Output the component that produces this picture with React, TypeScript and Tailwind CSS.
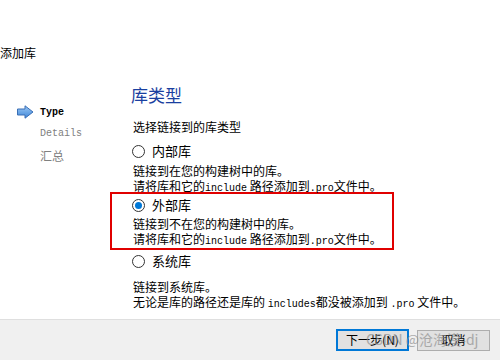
import React from "react";

const cjk = '"Microsoft YaHei", "Noto Sans CJK SC", sans-serif';
const mono = '"Liberation Mono", "Noto Sans CJK SC", monospace';

function Radio({ checked }: { checked?: boolean }) {
  return (
    <span className="relative inline-flex h-[13px] w-[13px] shrink-0 items-center justify-center rounded-full border border-[#333] bg-white">
      {checked && <span className="h-[7px] w-[7px] rounded-full bg-[#0078d7]" />}
    </span>
  );
}

function Mono({ children }: { children: React.ReactNode }) {
  return (
    <span className="text-[10px]" style={{ fontFamily: mono }}>
      {children}
    </span>
  );
}

export default function App() {
  return (
    <div
      className="relative flex h-[360px] w-[500px] flex-col overflow-hidden bg-white text-[12px] text-black"
      style={{ fontFamily: cjk }}
    >
      <div className="min-h-0 flex-1 overflow-hidden">
        <div className="pl-0 pt-[45px] text-[12px] leading-[16px]">添加库</div>
        <div className="flex">
          <div className="w-[131px] shrink-0 pt-[41px]" style={{ fontFamily: mono }}>
            <div className="flex h-[20px] items-center">
              <svg width="17" height="14" viewBox="0 0 17 14" className="ml-[17px] mr-[6px]">
                <defs>
                  <linearGradient id="ag" x1="0" y1="0" x2="0" y2="1">
                    <stop offset="0" stopColor="#9cc8f5" />
                    <stop offset="1" stopColor="#3d86d8" />
                  </linearGradient>
                </defs>
                <path d="M0.5 4 H8 V0.8 L16 7 L8 13.2 V10 H0.5 Z" fill="url(#ag)" stroke="#3a6fb5" strokeWidth="1" />
              </svg>
              <span className="text-[10px] font-bold text-black">Type</span>
            </div>
            <div className="flex h-[22px] items-center pl-[40px] text-[10px] text-[#808080]">Details</div>
            <div className="flex h-[24px] items-center pl-[40px] text-[12px] text-[#808080]" style={{ fontFamily: cjk }}>
              汇总
            </div>
          </div>
          <div className="flex-1 whitespace-nowrap pt-[24px]">
            <div className="text-[17px] leading-[20px] text-[#1a3fa0]">库类型</div>
            <div className="mt-[14px] pl-[2px] leading-[16px]">选择链接到的库类型</div>
            <div className="mt-[8px] flex h-[16px] items-center gap-[7px] pl-[1px] leading-[16px]">
              <Radio />
              <span className="text-[13px]">内部库</span>
            </div>
            <div className="mt-[4px] pl-[2px] leading-[15px]">
              <div className="h-[15px]">链接到在您的构建树中的库。</div>
              <div className="h-[15px]">
                请将库和它的<Mono>include</Mono> 路径添加到<Mono>.pro</Mono>文件中。
              </div>
            </div>
            <div className="-ml-[21px] -mt-[1px] w-[284px] border-2 border-[#e00000] pb-[2px] pl-[19px] pt-[3px]">
              <div className="flex h-[16px] items-center gap-[7px] pl-[1px] leading-[16px]">
                <Radio checked />
                <span className="text-[13px]">外部库</span>
              </div>
              <div className="mt-[3px] pl-[2px] leading-[15px]">
                <div className="h-[15px]">链接到不在您的构建树中的库。</div>
                <div className="h-[15px]">
                  请将库和它的<Mono>include</Mono> 路径添加到<Mono>.pro</Mono>文件中。
                </div>
              </div>
            </div>
            <div className="mt-[3px] flex h-[16px] items-center gap-[7px] pl-[1px] leading-[16px]">
              <Radio />
              <span className="text-[13px]">系统库</span>
            </div>
            <div className="mt-[10px] pl-[2px] leading-[15px]">
              <div className="h-[15px]">链接到系统库。</div>
              <div className="h-[15px]">
                无论是库的路径还是库的 <Mono>includes</Mono>都没被添加到 <Mono>.pro</Mono> 文件中。
              </div>
            </div>
          </div>
        </div>
      </div>
      <div className="flex h-[41px] shrink-0 items-center justify-end gap-[8px] border-t border-[#dfdfdf] bg-[#f0f0f0] pr-[10px]">
        <button className="flex h-[22px] w-[73px] items-center justify-center border-2 border-[#0078d7] bg-[#e1e1e1] text-[12px]">
          下一步(N)
        </button>
        <button className="flex h-[21px] w-[73px] items-center justify-center border border-[#adadad] bg-[#e1e1e1] text-[12px]">
          取消
        </button>
      </div>
      <div className="pointer-events-none absolute left-[366px] top-[330px] text-[14px] leading-[18px] text-[#909090] opacity-70">
        CSDN @沧海漠-dj
      </div>
    </div>
  );
}
